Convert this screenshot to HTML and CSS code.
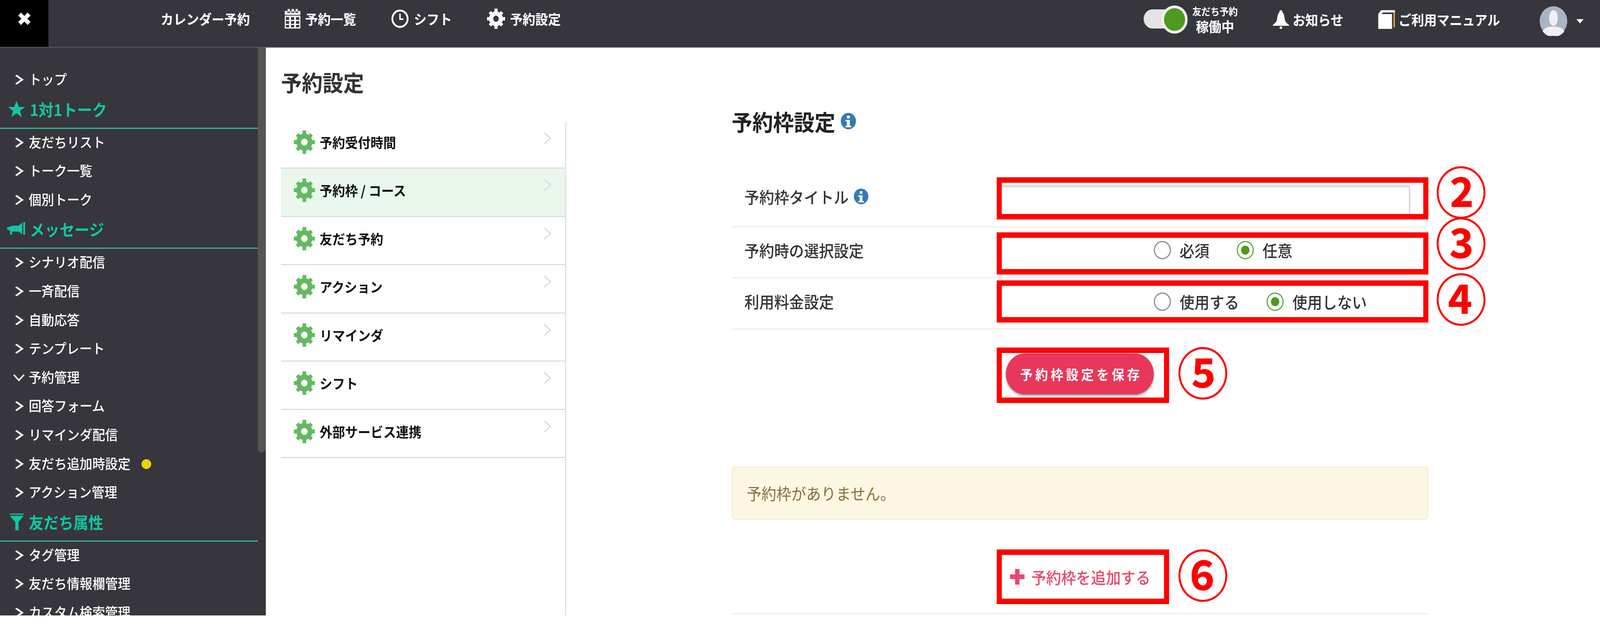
FILE: index.html
```html
<!DOCTYPE html>
<html lang="ja">
<head>
<meta charset="utf-8">
<title>予約設定</title>
<link rel="stylesheet" href="styles.css">
</head>
<body>
<svg class="defs" width="0" height="0" aria-hidden="true">
  <symbol id="gear" viewBox="0 0 58 60">
    <circle cx="29" cy="30" r="15.500" fill="none" stroke="currentColor" stroke-width="13"/>
    <g fill="currentColor">
      <rect x="24" y="0" width="10" height="12"/>
      <rect x="24" y="48" width="10" height="12"/>
      <rect x="0" y="25" width="11" height="10"/>
      <rect x="47" y="25" width="11" height="10"/>
      <rect x="24" y="2" width="10" height="12" transform="rotate(45 29 30)"/>
      <rect x="24" y="2" width="10" height="12" transform="rotate(135 29 30)"/>
      <rect x="24" y="2" width="10" height="12" transform="rotate(225 29 30)"/>
      <rect x="24" y="2" width="10" height="12" transform="rotate(315 29 30)"/>
    </g>
  </symbol>
  <symbol id="chev" viewBox="0 0 22 30">
    <path d="M3 1 L20 15 L3 29" fill="none" stroke="currentColor" stroke-width="3"/>
  </symbol>
  <symbol id="info" viewBox="0 0 42 42">
    <circle cx="21" cy="21" r="21" fill="#337ab7"/>
    <rect x="17" y="7" width="8" height="7" fill="#fff"/>
    <path d="M13 18h12v15h4v4H13v-4h4V22h-4z" fill="#fff"/>
  </symbol>
</svg>

<div class="app">
  <header class="topbar">
    <div class="brand">
      <svg class="close" viewBox="0 0 34 32"><path d="M8 0 L17 9 L26 0 L34 8 L25 16 L34 24 L26 32 L17 23 L8 32 L0 24 L9 16 L0 8 Z" fill="#fff"/></svg>
    </div>
    <nav class="nav">
      <span class="nav-item">カレンダー予約</span>
      <span class="nav-item">
        <svg class="ic-cal" viewBox="0 0 43 50">
          <path fill="#fff" d="M8 0h6v7H8zM19 0h6v7h-6zM30 0h6v7h-6zM0 5h7v5h8V5h3v5h8V5h3v5h8V5h6v45H0z"/>
          <g fill="#36363c"><rect x="0" y="15" width="43" height="2"/><rect x="3" y="21" width="9" height="7"/><rect x="17" y="21" width="9" height="7"/><rect x="31" y="21" width="9" height="7"/><rect x="3" y="31" width="9" height="7"/><rect x="17" y="31" width="9" height="7"/><rect x="31" y="31" width="9" height="7"/><rect x="3" y="41" width="9" height="6"/><rect x="17" y="41" width="9" height="6"/><rect x="31" y="41" width="9" height="6"/></g>
        </svg>
        予約一覧
      </span>
      <span class="nav-item">
        <svg class="ic-clock" viewBox="0 0 50 50"><circle cx="25" cy="25" r="21" fill="none" stroke="#fff" stroke-width="5"/><path d="M25 12v14h9" fill="none" stroke="#fff" stroke-width="4"/></svg>
        シフト
      </span>
      <span class="nav-item">
        <svg class="ic-gear-w"><use href="#gear"/></svg>
        予約設定
      </span>
    </nav>
    <div class="top-right">
      <div class="status">
        <span class="toggle"><span class="knob"></span></span>
        <span class="status-text"><small>友だち予約</small><b>稼働中</b></span>
      </div>
      <span class="nav-item">
        <svg class="ic-bell" viewBox="0 0 45 48"><path fill="#fff" d="M22.500 0c3 0 4 3 4.500 6 4 3 5 9 6 17 1 6 5 10 12 15v2H0v-2c7-5 11-9 12-15 1-8 2-14 6-17 .5-3 1.500-6 4.500-6z"/><circle cx="22.500" cy="45" r="3.500" fill="#fff"/></svg>
        お知らせ
      </span>
      <span class="nav-item">
        <svg class="ic-book" viewBox="0 0 46 48"><path fill="#fff" d="M0 10 L8 0 H46 V6 H14 L8 10 H38 V48 H0Z"/><path fill="#e8a33d" d="M42 6h4v38h-4z"/></svg>
        ご利用マニュアル
      </span>
      <span class="user">
        <svg class="avatar" viewBox="0 0 76 76"><circle cx="38" cy="38" r="38" fill="#a8b6c4"/><ellipse cx="38" cy="30" rx="12" ry="20" fill="#eef0f5"/><path d="M8 64c6-10 18-12 30-12s24 2 30 12a38 38 0 0 1-60 0z" fill="#eef0f5"/></svg>
        <span class="caret"></span>
      </span>
    </div>
  </header>

  <div class="main">
    <aside class="sidebar">
      <ul class="side-list">
        <li class="side-item">トップ</li>
        <li class="side-head">
          <svg class="ic-star" viewBox="0 0 47 42"><polygon points="23.500,0 30,16 47,16 33,26 38,42 23.500,32 9,42 14,26 0,16 17,16" fill="currentColor"/></svg>
          1対1トーク
        </li>
        <li class="side-item">友だちリスト</li>
        <li class="side-item">トーク一覧</li>
        <li class="side-item">個別トーク</li>
        <li class="side-head">
          <svg class="ic-mega" viewBox="0 0 50 32"><path d="M0 14 L14 9 H32 L42 1 V31 L32 24 H14 V32 H9 V22 L0 18Z" fill="currentColor"/><rect x="45" y="0" width="5" height="32" fill="currentColor"/></svg>
          メッセージ
        </li>
        <li class="side-item">シナリオ配信</li>
        <li class="side-item">一斉配信</li>
        <li class="side-item">自動応答</li>
        <li class="side-item">テンプレート</li>
        <li class="side-item is-open">予約管理</li>
        <li class="side-item">回答フォーム</li>
        <li class="side-item">リマインダ配信</li>
        <li class="side-item">友だち追加時設定<span class="dot"></span></li>
        <li class="side-item">アクション管理</li>
        <li class="side-head head-filter">
          <svg class="ic-filter" viewBox="0 0 38 43"><path d="M0 0H38V3H0ZM0 6H38L24 22V43H15V22Z" fill="currentColor"/></svg>
          友だち属性
        </li>
        <li class="side-item">タグ管理</li>
        <li class="side-item">友だち情報欄管理</li>
        <li class="side-item">カスタム検索管理</li>
      </ul>
      <div class="scrollbar"></div>
    </aside>

    <main class="content">
      <section class="left-col">
        <h1 class="page-title">予約設定</h1>
        <ul class="menu">
          <li class="menu-item"><svg class="ic-gear"><use href="#gear"/></svg>予約受付時間<svg class="ic-chev"><use href="#chev"/></svg></li>
          <li class="menu-item is-active"><svg class="ic-gear"><use href="#gear"/></svg>予約枠 / コース<svg class="ic-chev"><use href="#chev"/></svg></li>
          <li class="menu-item"><svg class="ic-gear"><use href="#gear"/></svg>友だち予約<svg class="ic-chev"><use href="#chev"/></svg></li>
          <li class="menu-item"><svg class="ic-gear"><use href="#gear"/></svg>アクション<svg class="ic-chev"><use href="#chev"/></svg></li>
          <li class="menu-item"><svg class="ic-gear"><use href="#gear"/></svg>リマインダ<svg class="ic-chev"><use href="#chev"/></svg></li>
          <li class="menu-item"><svg class="ic-gear"><use href="#gear"/></svg>シフト<svg class="ic-chev"><use href="#chev"/></svg></li>
          <li class="menu-item"><svg class="ic-gear"><use href="#gear"/></svg>外部サービス連携<svg class="ic-chev"><use href="#chev"/></svg></li>
        </ul>
      </section>

      <section class="right-col">
        <h2 class="section-title">予約枠設定<svg class="ic-info-lg"><use href="#info"/></svg></h2>

        <div class="form-row row-title">
          <div class="label">予約枠タイトル<svg class="ic-info"><use href="#info"/></svg></div>
          <div class="mark mark-wide">
            <div class="input-clip"><div class="fake-input"></div></div>
            <span class="num num-2">②</span>
          </div>
        </div>
        <div class="form-row row-select">
          <div class="label">予約時の選択設定</div>
          <div class="mark mark-wide">
            <div class="radios radios-up">
              <span class="radio"><i class="circle"></i>必須</span>
              <span class="radio"><i class="circle is-on"></i>任意</span>
            </div>
            <span class="num num-3">③</span>
          </div>
        </div>
        <div class="form-row row-fee">
          <div class="label">利用料金設定</div>
          <div class="mark mark-wide">
            <div class="radios">
              <span class="radio"><i class="circle"></i>使用する</span>
              <span class="radio"><i class="circle is-on"></i>使用しない</span>
            </div>
            <span class="num num-4">④</span>
          </div>
        </div>

        <div class="mark mark-btn mark-save">
          <button class="save-btn" type="button">予約枠設定を保存</button>
          <span class="num num-5">⑤</span>
        </div>

        <div class="alert">予約枠がありません。</div>

        <div class="mark mark-btn mark-add">
          <span class="add-link"><svg class="ic-plus" viewBox="0 0 40 40"><path d="M14 0h12v14h14v12H26v14H14V26H0V14h14z" fill="currentColor"/></svg>予約枠を追加する</span>
          <span class="num num-6">⑥</span>
        </div>
        <div class="bottom-rule"></div>
      </section>
    </main>
  </div>
</div>
</body>
</html>
```
FILE: styles.css
```css
* { box-sizing: border-box; }
html, body { margin: 0; padding: 0; background: #fff; width: 100%; height: 100%; overflow: hidden; }
body {
  font-family: "Noto Sans CJK JP", "Noto Sans", sans-serif;
  font-size: 35px;
  color: #333;
}
ul { list-style: none; margin: 0; padding: 0; }
h1, h2 { margin: 0; }
.defs { position: absolute; }

.app { width: 4400px; height: 1576px; display: flex; flex-direction: column; overflow: hidden; transform-origin: 0 0; }
/* the window can be capped narrower than the 4400px design width */
@media (max-width: 4399px) {
  .app { transform: scaleX(.93091); }
}

/* top bar */
.topbar {
  flex: 0 0 120px;
  display: flex;
  background: #36363c;
  color: #fff;
  border-bottom: 2px solid #5a5a5e;
}
.brand {
  flex: 0 0 133px;
  height: 120px;
  background: #000;
  display: flex;
  justify-content: center;
  padding-top: 32px;
}
.close { width: 34px; height: 32px; }
.nav { display: flex; align-items: center; gap: 96px; margin-left: 309px; height: 96px; }
.nav-item { display: flex; align-items: center; gap: 13px; line-height: 50px; font-weight: 700; white-space: nowrap; }
.ic-cal { width: 43px; height: 50px; }
.ic-clock { width: 50px; height: 50px; }
.ic-gear-w { width: 50px; height: 52px; color: #fff; }

.top-right { margin-left: auto; display: flex; align-items: center; height: 100px; padding-right: 45px; }
.top-right .nav-item { margin-left: 96px; gap: 10px; }
.status { display: flex; align-items: center; gap: 13px; }
.toggle { width: 121px; height: 72px; position: relative; display: block; }
.toggle::before {
  content: "";
  display: block;
  position: absolute;
  left: 0; top: 10px;
  width: 100px; height: 49px;
  background: #e4e4e4;
  border-radius: 25px;
}
.knob {
  position: absolute;
  left: 49px; top: 0;
  width: 72px; height: 72px;
  border-radius: 50%;
  background: #4d9a1e;
  border: 7px solid #f2f2f2;
}
.status-text { display: flex; flex-direction: column; align-items: center; width: 125px; white-space: nowrap; }
.status-text small { font-size: 25px; line-height: 34px; font-weight: 700; }
.status-text b { font-size: 35px; line-height: 44px; font-weight: 700; }
.ic-bell { width: 45px; height: 48px; }
.ic-book { width: 46px; height: 48px; }
.user { display: flex; align-items: center; gap: 25px; margin-left: 109px; padding-top: 8px; }
.avatar { width: 76px; height: 76px; }
.caret { width: 0; height: 0; border-left: 10px solid transparent; border-right: 10px solid transparent; border-top: 11px solid #fff; }

/* layout */
.main { flex: 1; display: flex; min-height: 0; }

/* sidebar */
.sidebar { flex: 0 0 731px; background: #36363c; position: relative; overflow: hidden; color: #fff; }
.side-list { width: 709px; padding-top: 50px; }
.side-item {
  height: 73.600px;
  padding-left: 79px;
  line-height: 60px;
  padding-bottom: 13.600px;
  position: relative;
  display: flex;
  font-weight: 500;
}
.side-item::before {
  content: "";
  position: absolute;
  left: 37px; top: 23px;
  width: 14px; height: 14px;
  border-top: 4px solid #fff;
  border-right: 4px solid #fff;
  transform: scaleX(1.5) rotate(45deg);
}
.side-item.is-open::before {
  left: 41px; top: 15px;
  width: 18px; height: 18px;
  transform: rotate(135deg);
}
.side-head {
  height: 87px;
  display: flex;
  align-items: flex-start;
  font-size: 41px;
  font-weight: 700;
  line-height: 66px;
  color: #0fc8a2;
  padding-left: 82px;
  position: relative;
}
.side-head::after {
  content: "";
  position: absolute;
  left: 0; right: 0; bottom: 3px;
  height: 3px;
  background: #36b79c;
}
.head-filter { padding-left: 79px; }
.ic-star { position: absolute; left: 22px; top: 12px; width: 47px; height: 42px; }
.ic-mega { position: absolute; left: 19px; top: 16px; width: 50px; height: 32px; }
.ic-filter { position: absolute; left: 27px; top: 12px; width: 38px; height: 43px; }
.dot { width: 27px; height: 25px; border-radius: 50%; background: #e8d500; margin: 20px 0 0 30px; }
.scrollbar { position: absolute; left: 709px; top: 0; width: 21px; height: 1037px; background: #555; border-radius: 0 0 10px 10px; }

/* content */
.content { flex: 1; display: flex; min-width: 0; }
.left-col { flex: 0 0 824px; padding-left: 42px; display: flex; flex-direction: column; }
.page-title { font-size: 57px; line-height: 70px; font-weight: 700; margin-top: 52px; color: #333; }
.menu { flex: 1; margin-top: 68px; border-right: 3px solid #ddd; width: 784px; }
.menu-item {
  display: flex;
  align-items: flex-start;
  color: #111;
  font-weight: 700;
  line-height: 60px;
  padding: 25px 0 0 35px;
  height: 123.500px;
  border-bottom: 3px solid #ddd;
  position: relative;
}
.menu-item:first-child { height: 120px; padding-top: 22px; }
.menu-item.is-active { background: #eaf7ec; }
.ic-gear { width: 58px; height: 60px; color: #63b960; margin-right: 13px; flex: none; }
.ic-chev { position: absolute; right: 38px; top: 27px; width: 22px; height: 30px; color: #d9d9dc; }

.right-col { flex: 0 0 1908px; margin-left: 455px; }
.section-title { font-size: 57px; line-height: 70px; font-weight: 700; color: #222; margin-top: 153px; display: flex; align-items: center; gap: 15px; height: 70px; }
.ic-info-lg { width: 42px; height: 42px; }
.ic-info { width: 40px; height: 42px; margin-left: 14px; }

.form-row {
  display: grid;
  grid-template-columns: 729px 1187px;
  align-items: start;
  border-bottom: 3px solid #eee;
  height: 131px;
}
.row-title { height: 237px; padding-top: 109px; }
.row-title .label { margin-top: 19px; }
.row-select { padding-top: 13px; }
.row-select .label { margin-top: 15px; }
.row-fee { padding-top: 5px; }
.row-fee .label { margin-top: 23px; }
.label { font-size: 41px; font-weight: 500; line-height: 60px; padding-left: 35px; display: flex; align-items: center; color: #333; }

.mark { border: 14px solid #f00; position: relative; }
.mark-wide { height: 108px; }
.num {
  position: absolute;
  left: calc(100% + 33px);
  width: 142px;
  text-align: center;
  font-size: 142px;
  line-height: 120px;
  font-weight: 700;
  color: #f00;
}
.num-2 { top: -43px; }
.num-3 { top: -53px; }
.num-4 { top: -33px; }
.num-5 { top: -16px; left: calc(100% + 36px); }
.num-6 { top: -15px; left: calc(100% + 36px); }
.input-clip { height: 100%; overflow: hidden; }
.fake-input { height: 120px; width: 1133px; border: 3px solid #ccc; border-radius: 4px; margin: 7px 0 0 -10px; box-shadow: inset 0 3px 3px rgba(0,0,0,.08); background: #fff; }
.radios { display: flex; gap: 75px; padding-left: 418px; height: 80px; align-items: center; font-size: 41px; font-weight: 500; }
.radios-up { height: 62px; }
.radio { display: flex; align-items: center; gap: 24px; }
.circle { display: block; width: 47px; height: 47px; border-radius: 50%; border: 3px solid #888; background: #fff; position: relative; }
.circle.is-on { border-color: #5aa83c; }
.circle.is-on::after { content: ""; position: absolute; left: 9px; top: 9px; width: 23px; height: 23px; border-radius: 50%; background: #4d9a1e; }

.mark-btn { width: 474px; height: 142px; margin-left: 729px; display: block; }
.mark-save { margin-top: 46px; padding: 1px 0 0 11px; }
.save-btn {
  display: block;
  width: 407px; height: 105px;
  border: 0; border-radius: 53px;
  background: #e8375a;
  color: #fff;
  font: 700 35px/105px "Noto Sans CJK JP", sans-serif;
  letter-spacing: 7px;
  padding: 0 0 4px 7px;
  box-shadow: 0 4px 6px rgba(0,0,0,.35);
}
.alert {
  margin-top: 162px;
  height: 138px;
  background: #fdf7e4;
  border: 3px solid #faefd2;
  border-radius: 10px;
  color: #8a6d3b;
  font-size: 41px;
  line-height: 130px;
  padding-left: 38px;
}
.mark-add { margin-top: 75px; height: 140px; padding: 0 0 0 22px; }
.add-link { display: flex; align-items: center; gap: 18px; height: 112px; font-size: 41px; font-weight: 500; color: #e8486a; white-space: nowrap; }
.ic-plus { width: 41px; height: 40px; }
.bottom-rule { border-bottom: 3px solid #eee; margin-top: 23px; }
```
